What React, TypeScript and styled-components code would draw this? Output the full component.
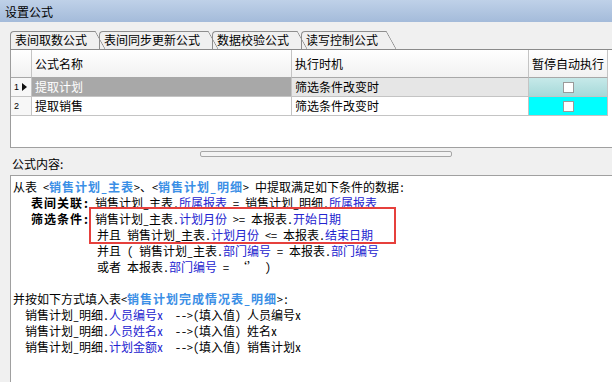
import React from "react";
import styled, { createGlobalStyle } from "styled-components";

const GlobalStyle = createGlobalStyle`
  html, body { margin: 0; padding: 0; }
  body {
    width: 612px;
    height: 382px;
    overflow: hidden;
    background: #f0f0f0;
    font-family: "Noto Sans CJK SC", "Liberation Sans", sans-serif;
    font-size: 12px;
    color: #000;
  }
`;

const Window = styled.div`
  display: flex;
  flex-direction: column;
  height: 382px;
`;

const TitleBar = styled.div`
  height: 22px;
  display: flex;
  align-items: center;
  padding-left: 5px;
  background: linear-gradient(#bfd1e8, #a4bbda);
`;

const Body = styled.div`
  flex: 1;
  display: flex;
  flex-direction: column;
  padding-left: 10px;
  min-height: 0;
`;

const TabStrip = styled.div`
  display: flex;
  padding-top: 9px;
  height: 18px;
`;

const Tab = styled.div<{ $active?: boolean }>`
  position: relative;
  height: 18px;
  line-height: 18px;
  padding: 0 18px 0 5px;
  margin-right: -6px;
  white-space: nowrap;
  z-index: ${(p) => (p.$active ? 2 : 1)};
  &::before {
    content: "";
    position: absolute;
    left: 0;
    top: 0;
    bottom: -1px;
    right: 10px;
    border-top: 1px solid #8e8e8e;
    border-left: 1px solid #8e8e8e;
    border-top-left-radius: 4px;
  }
  &::after {
    content: "";
    position: absolute;
    right: 0;
    top: 0;
    bottom: 0;
    width: 10px;
    background: linear-gradient(
      to top right,
      transparent calc(50% - 0.7px),
      #8e8e8e,
      transparent calc(50% + 0.7px)
    );
  }
`;

const GridBox = styled.div`
  height: 97px;
  border-top: 1px solid #8a8a8a;
  border-left: 1px solid #9c9c9c;
  border-bottom: 1px solid #a0a0a0;
  background: #fff;
  display: grid;
  grid-template-columns: 21px 260px 237px 79px;
  grid-auto-rows: min-content;
  align-content: start;
`;

const HeadCell = styled.div`
  height: 27px;
  line-height: 27px;
  padding-left: 3px;
  border-right: 1px solid #c4c4c4;
  border-bottom: 1px solid #a8a8a8;
  background: linear-gradient(#ffffff, #f1f1f1);
  white-space: nowrap;
  overflow: hidden;
`;

const Cell = styled.div<{ $bg?: string; $light?: boolean; $center?: boolean }>`
  height: 18px;
  line-height: 18px;
  padding-left: ${(p) => (p.$center ? 0 : 3)}px;
  border-right: 1px solid #c4c4c4;
  border-bottom: 1px solid #c4c4c4;
  background: ${(p) => p.$bg || "#fff"};
  color: ${(p) => (p.$light ? "#fff" : "#000")};
  white-space: nowrap;
  overflow: hidden;
  display: flex;
  align-items: center;
  justify-content: ${(p) => (p.$center ? "center" : "flex-start")};
`;

const RowNo = styled.div`
  height: 18px;
  display: flex;
  align-items: center;
  gap: 3px;
  padding-left: 3px;
  border-right: 1px solid #c4c4c4;
  border-bottom: 1px solid #c4c4c4;
  background: #f7f7f7;
  font-family: "Liberation Sans", sans-serif;
  font-size: 9px;
`;

const Pointer = styled.span`
  width: 0;
  height: 0;
  border-left: 5px solid #111;
  border-top: 4px solid transparent;
  border-bottom: 4px solid transparent;
`;

const Check = styled.span`
  width: 9px;
  height: 9px;
  background: #fff;
  border: 1px solid #9a9a9a;
`;

const Band = styled.div`
  height: 27px;
  display: flex;
  align-items: flex-start;
`;

const BandLabel = styled.div`
  width: 188px;
  padding: 8px 0 0 2px;
  line-height: 16px;
`;

const Grip = styled.div`
  margin-top: 3px;
  width: 250px;
  height: 4px;
  border: 1px solid #a6a6a6;
  border-radius: 2px;
  background: #f3f3f3;
`;

const Memo = styled.div`
  flex: 1;
  background: #fff;
  border-top: 1px solid #a0a0a0;
  border-left: 1px solid #a0a0a0;
  padding: 3px 0 0 2px;
  font-family: "Noto Sans Mono CJK SC", "Noto Sans CJK SC", monospace;
  font-size: 12px;
`;

const Line = styled.div<{ $indent?: number }>`
  height: 16px;
  line-height: 16px;
  white-space: pre;
  padding-left: ${(p) => p.$indent || 0}px;
`;

const CondRow = styled.div`
  display: grid;
  grid-template-columns: 64px auto;
  padding-left: 18px;
`;

const Label = styled.div`
  height: 16px;
  line-height: 16px;
  font-weight: bold;
  letter-spacing: 1px;
  white-space: pre;
`;

const Highlight = styled.div`
  position: relative;
  &::after {
    content: "";
    position: absolute;
    left: -6px;
    top: -4px;
    width: 303px;
    bottom: -1px;
    border: 2px solid #e6403c;
  }
`;

const Table = styled.b`
  color: #3b8fe6;
  font-weight: bold;
  letter-spacing: 1px;
`;

const Field = styled.span`
  color: #2323cf;
`;

const Target = styled.span`
  display: inline-block;
  width: 150px;
`;

const tabs = ["表间取数公式", "表间同步更新公式", "数据校验公式", "读写控制公式"];

const fills = [
  { field: "人员编号x", value: "人员编号x" },
  { field: "人员姓名x", value: "姓名x" },
  { field: "计划金额x", value: "销售计划x" },
];

export default function App() {
  return (
    <Window>
      <GlobalStyle />
      <TitleBar>设置公式</TitleBar>
      <Body>
        <TabStrip>
          {tabs.map((t, i) => (
            <Tab key={t} $active={i === 0}>
              {t}
            </Tab>
          ))}
        </TabStrip>
        <GridBox>
          <HeadCell />
          <HeadCell>公式名称</HeadCell>
          <HeadCell>执行时机</HeadCell>
          <HeadCell>暂停自动执行</HeadCell>

          <RowNo>
            1<Pointer />
          </RowNo>
          <Cell $bg="#a8a8a8" $light>
            提取计划
          </Cell>
          <Cell $bg="#e6e6e6">筛选条件改变时</Cell>
          <Cell $bg="linear-gradient(#c6e9e9, #a6d9d9)" $center>
            <Check />
          </Cell>

          <RowNo>2</RowNo>
          <Cell>提取销售</Cell>
          <Cell>筛选条件改变时</Cell>
          <Cell $bg="#00ffff" $center>
            <Check />
          </Cell>
        </GridBox>
        <Band>
          <BandLabel>公式内容:</BandLabel>
          <Grip />
        </Band>
        <Memo>
          <Line>
            从表 &lt;<Table>销售计划_主表</Table>&gt;、&lt;<Table>销售计划_明细</Table>&gt; 中提取满足如下条件的数据:
          </Line>
          <CondRow>
            <Label>表间关联:</Label>
            <Line>
              销售计划_主表.<Field>所属报表</Field> = 销售计划_明细.<Field>所属报表</Field>
            </Line>
          </CondRow>
          <CondRow>
            <Label>筛选条件:</Label>
            <div>
              <Highlight>
                <Line>
                  销售计划_主表.<Field>计划月份</Field> &gt;= 本报表.<Field>开始日期</Field>
                </Line>
                <Line $indent={2}>
                  并且 销售计划_主表.<Field>计划月份</Field> &lt;= 本报表.<Field>结束日期</Field>
                </Line>
              </Highlight>
              <Line $indent={2}>
                并且 ( 销售计划_主表.<Field>部门编号</Field> = 本报表.<Field>部门编号</Field>
              </Line>
              <Line $indent={2}>
                或者 本报表.<Field>部门编号</Field> = ‘’ )
              </Line>
            </div>
          </CondRow>
          <Line />
          <Line>
            并按如下方式填入表&lt;<Table>销售计划完成情况表_明细</Table>&gt;:
          </Line>
          {fills.map((f) => (
            <Line key={f.field} $indent={12}>
              <Target>
                销售计划_明细.<Field>{f.field}</Field>
              </Target>
              --&gt;(填入值) {f.value}
            </Line>
          ))}
        </Memo>
      </Body>
    </Window>
  );
}
